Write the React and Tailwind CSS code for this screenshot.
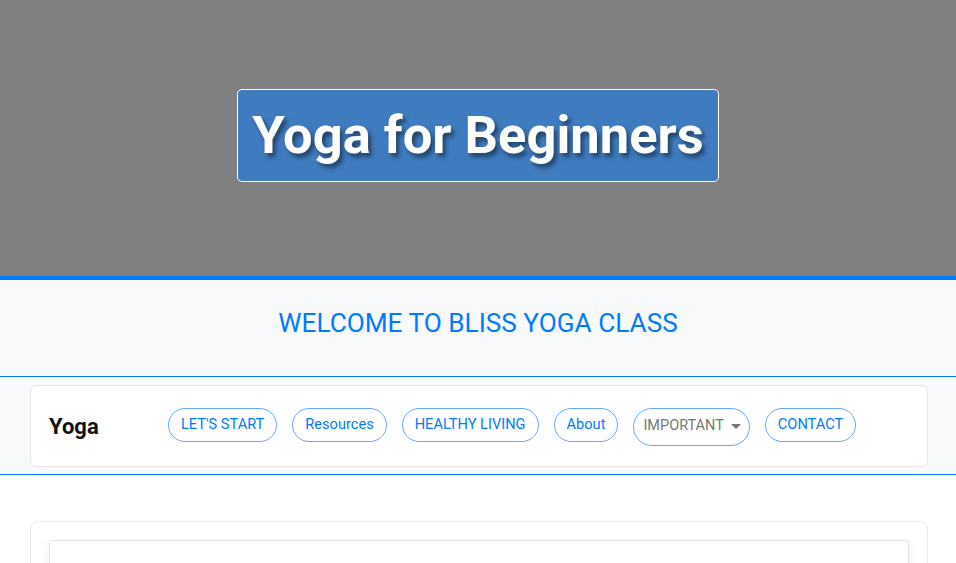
import React from 'react';

const font = { fontFamily: 'Roboto, "Liberation Sans", sans-serif' };

const links = ["LET'S START", 'Resources', 'HEALTHY LIVING', 'About'];

const Pill = ({ children }) => (
  <a className="h-[34px] px-[12px] flex items-center rounded-full border border-[#66a8ff] text-[#007bff] text-[14.6px] leading-none">
    {children}
  </a>
);

const Rule = () => <div className="h-px bg-[#007bff]" />;

const App = () => {
  return (
    <div className="h-[563px] overflow-hidden bg-white" style={font}>
      <header className="h-[276px] bg-[#808080] flex items-center justify-center">
        <h1 className="mt-[-5px] px-[14px] h-[93px] flex items-center bg-[#3f7bbf] border border-white rounded-[5px] text-white font-bold text-[52.5px] leading-none [text-shadow:3px_4px_4px_rgba(0,0,0,0.45)]">
          Yoga for Beginners
        </h1>
      </header>
      <div className="h-[4px] bg-[#007bff]" />

      <section className="h-[96px] bg-[#f8f9fa] flex items-center justify-center">
        <h2 className="text-[26.2px] text-[#007bff] leading-none mt-[-10px]">WELCOME TO BLISS YOGA CLASS</h2>
      </section>
      <Rule />

      <nav className="bg-[#f8f9fa] pl-[30px] pr-[28px] pt-[8px] pb-[7px]">
        <div className="h-[82px] bg-white border border-[#e6e6e6] rounded-[6px] flex items-center pl-[18px]">
          <span className="text-[22px] font-bold text-[#111] w-[119px]">Yoga</span>
          <div className="flex items-center gap-[15px] mt-[-3px]">
            {links.map((l) => (
              <Pill key={l}>{l}</Pill>
            ))}
            <button className="h-[38px] pl-[9px] pr-[8px] mt-[4px] flex items-center gap-[7px] rounded-full border border-[#66a8ff] text-[#777] text-[14.5px] leading-none">
              IMPORTANT
              <span className="w-0 h-0 border-l-[5px] border-r-[5px] border-t-[5px] border-l-transparent border-r-transparent border-t-[#777]" />
            </button>
            <Pill>CONTACT</Pill>
          </div>
        </div>
      </nav>
      <Rule />

      <main className="pl-[30px] pr-[28px] pt-[46px]">
        <div className="border border-[#ebebeb] rounded-[8px] px-[18px] pt-[18px] h-[80px]">
          <div className="h-[60px] border border-[#e3e3e3] rounded-[3px] shadow-[0_2px_10px_rgba(0,0,0,0.08)]" />
        </div>
      </main>
    </div>
  );
};

export default App;
